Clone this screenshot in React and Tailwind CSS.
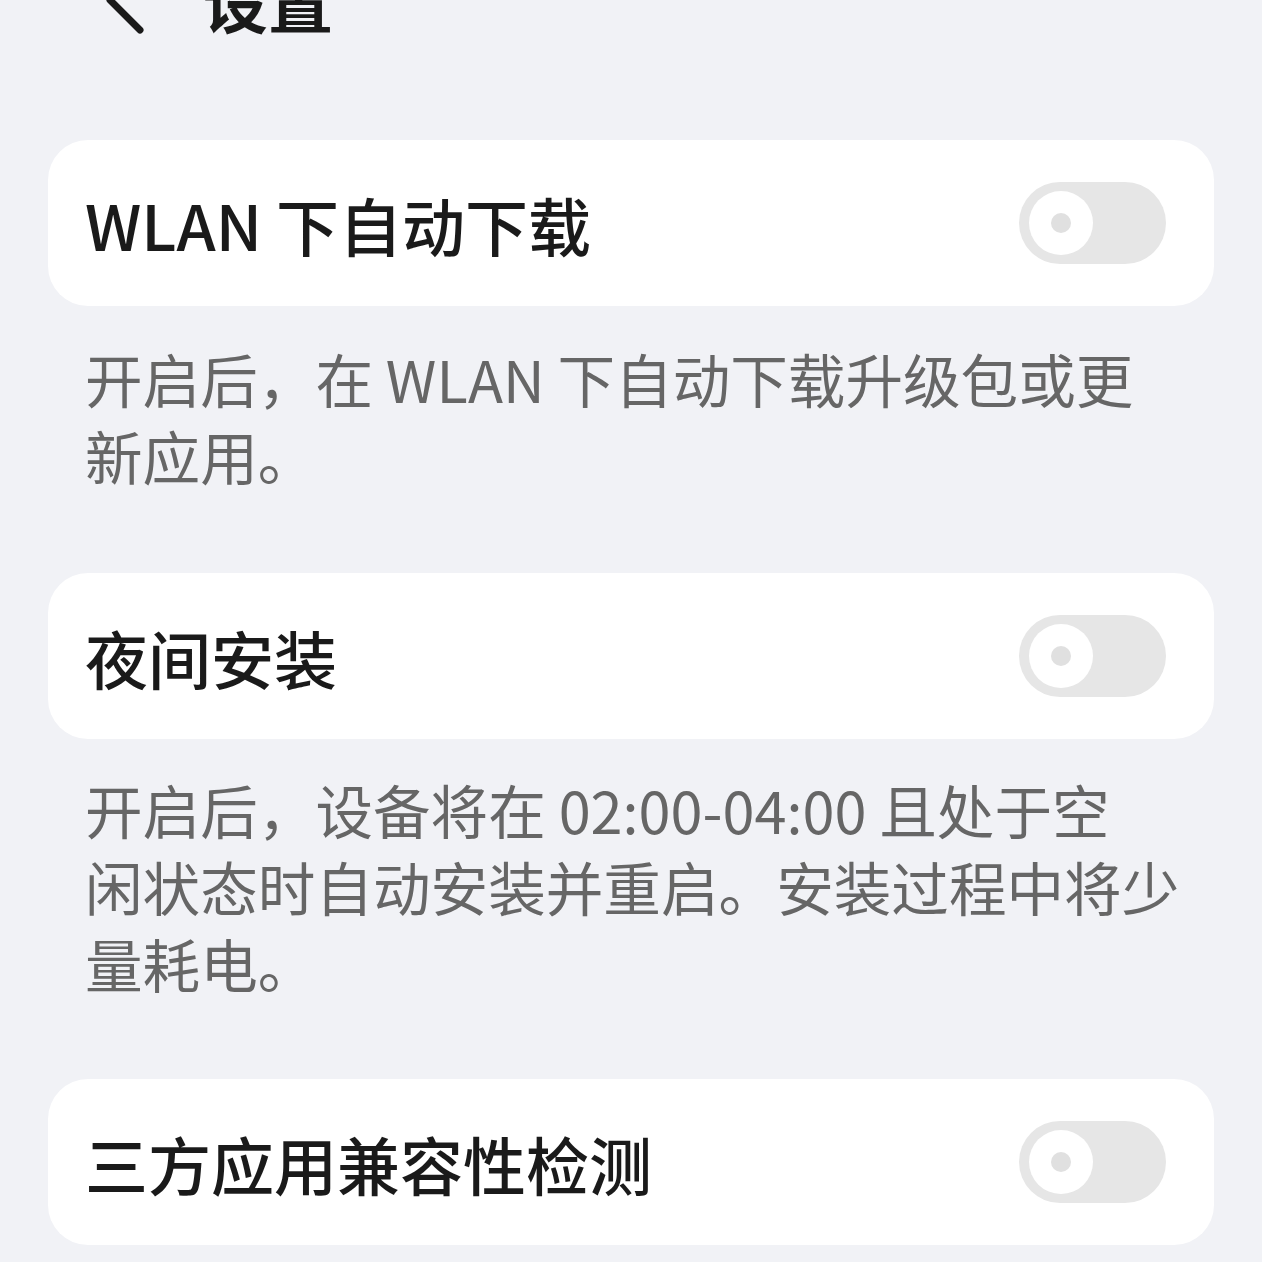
const Toggle = () => (
    <div className="w-[147px] h-[82px] rounded-full bg-[#e6e6e6] flex items-center pl-[10px] shrink-0">
        <div className="w-[64px] h-[64px] rounded-full bg-white flex items-center justify-center">
            <div className="w-[20px] h-[20px] rounded-full bg-[#e0e0e0]" />
        </div>
    </div>
);

const SettingCard = ({ title }) => (
    <div className="mx-[48px] h-[166px] rounded-[40px] bg-white flex items-center justify-between pl-[37px] pr-[48px]">
        <span className="text-[63px] font-medium text-[#1a1a1a] leading-none">{title}</span>
        <Toggle />
    </div>
);

const Note = ({ lines }) => (
    <div className="pl-[85px] text-[57.6px] leading-[77px] text-[#666666]">
        {lines.map((line) => (
            <div key={line} className="whitespace-nowrap">{line}</div>
        ))}
    </div>
);

const App = () => {
    return (
        <div
            className="w-[1262px] h-[1262px] overflow-hidden bg-[#f1f2f6]"
            style={{ fontFamily: '"Noto Sans CJK SC", "Noto Sans", sans-serif' }}
        >
            <div className="h-[72px] -mt-[36px] flex items-center pl-[104px]">
                <svg width="44" height="72" viewBox="0 0 44 72" className="shrink-0">
                    <path d="M36 6 L6 36 L36 66" fill="none" stroke="#1a1a1a" strokeWidth="7" strokeLinecap="round" strokeLinejoin="round" />
                </svg>
                <span className="ml-[55px] text-[65px] font-bold text-[#1a1a1a] leading-none">设置</span>
            </div>

            <div className="mt-[104px]">
                <SettingCard title="WLAN 下自动下载" />
            </div>
            <div className="mt-[34px]">
                <Note lines={["开启后，在 WLAN 下自动下载升级包或更", "新应用。"]} />
            </div>

            <div className="mt-[79px]">
                <SettingCard title="夜间安装" />
            </div>
            <div className="mt-[32px]">
                <Note lines={["开启后，设备将在 02:00-04:00 且处于空", "闲状态时自动安装并重启。安装过程中将少", "量耗电。"]} />
            </div>

            <div className="mt-[77px]">
                <SettingCard title="三方应用兼容性检测" />
            </div>
        </div>
    );
};

export default App;
